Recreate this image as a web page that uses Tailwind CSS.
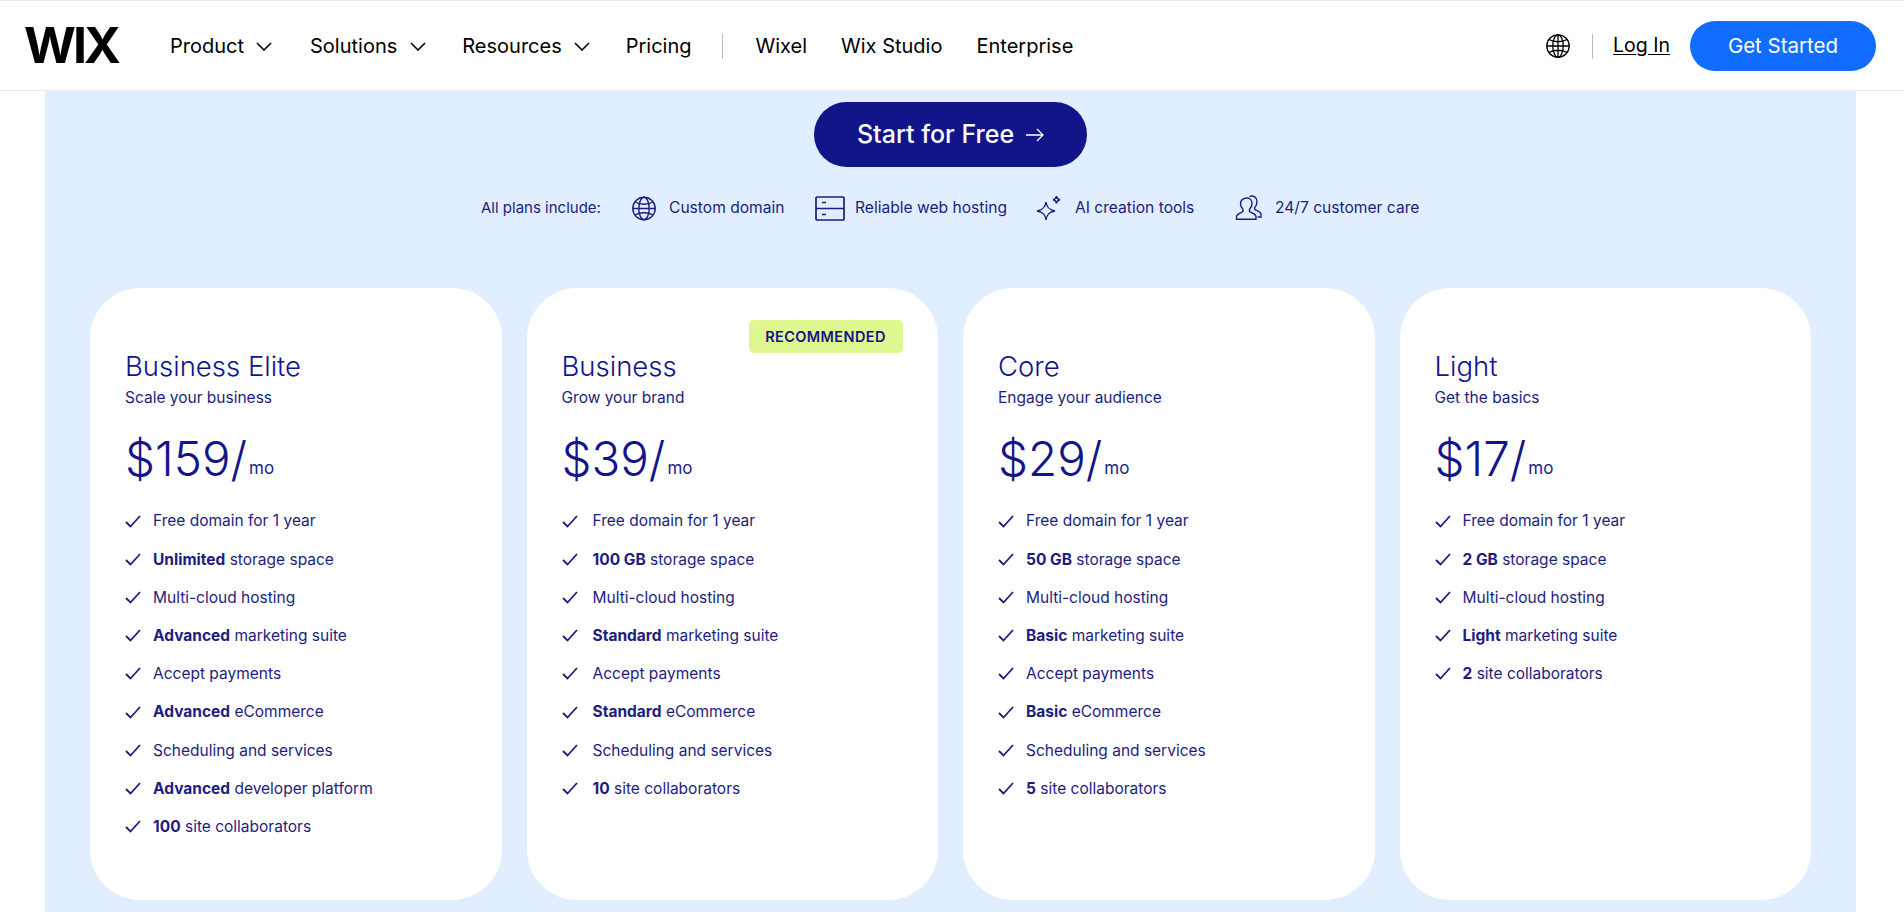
<!DOCTYPE html>
<html lang="en">
<head>
    <meta charset="UTF-8">
    <meta name="viewport" content="width=device-width, initial-scale=1.0">
    <title>Wix Plans</title>
    <script src="https://cdn.jsdelivr.net/npm/@tailwindcss/browser@4"></script>
</head>
<body class="bg-white h-screen overflow-hidden font-['Inter',sans-serif]">
    <!-- Header -->
    <header class="h-[91px] pt-px bg-white border-t border-b border-[#e9e9ee] flex items-center text-black text-[20px]">
        <div class="ml-[24px] -mt-[2px] w-[146px] text-[50px] leading-none font-bold tracking-[-3px]">WIX</div>
        <nav class="flex items-center">
            <a class="flex items-center">Product<svg class="ml-[12px]" width="16" height="9" viewBox="0 0 16 9" fill="none" stroke="#000" stroke-width="1.6"><path d="M1 1l7 7 7-7"/></svg></a>
            <a class="flex items-center ml-[38px]">Solutions<svg class="ml-[13px]" width="16" height="9" viewBox="0 0 16 9" fill="none" stroke="#000" stroke-width="1.6"><path d="M1 1l7 7 7-7"/></svg></a>
            <a class="flex items-center ml-[36px]">Resources<svg class="ml-[12px]" width="16" height="9" viewBox="0 0 16 9" fill="none" stroke="#000" stroke-width="1.6"><path d="M1 1l7 7 7-7"/></svg></a>
            <a class="ml-[36px]">Pricing</a>
            <span class="ml-[30px] w-px h-[25px] bg-[#bdbdbd]"></span>
            <a class="ml-[33px]">Wixel</a>
            <a class="ml-[34px]">Wix Studio</a>
            <a class="ml-[34px]">Enterprise</a>
        </nav>
        <div class="ml-auto mr-[28px] flex items-center">
            <svg width="24" height="24" viewBox="0 0 24 24" fill="none" stroke="#000" stroke-width="1.3"><circle cx="12" cy="12" r="11.200"/><ellipse cx="12" cy="12" rx="5.200" ry="11.200"/><path d="M12 .8v22.400M.8 12h22.400M3 5.500c5 3 13 3 18 0M3 18.500c5-3 13-3 18 0"/></svg>
            <span class="ml-[22px] w-px h-[25px] bg-[#bdbdbd]"></span>
            <a class="ml-[20px] text-[19.500px] underline underline-offset-2">Log In</a>
            <a class="ml-[20px] w-[186px] h-[50px] rounded-full bg-[#116dff] text-white text-[20.500px] flex items-center justify-center">Get Started</a>
        </div>
    </header>

    <!-- Plans panel -->
    <main class="mx-[45px] w-[1811px] h-[821px] bg-[#e0eeff] text-[#1d1d7e] pt-[11px]">
        <div class="flex justify-center">
            <a class="w-[273px] h-[65px] rounded-full bg-[#12148a] text-white text-[25px] font-medium flex items-center justify-center">Start for Free<svg class="ml-[12px]" width="18" height="14" viewBox="0 0 18 14" fill="none" stroke="#fff" stroke-width="1.3"><path d="M0 7h17M11 1l6 6-6 6"/></svg></a>
        </div>
        <div class="mt-[28px] h-[26px] flex items-center text-[15.600px] pl-[436px]">
            <span class="w-[151px] text-[15px]">All plans include:</span>
            <svg width="24" height="25" viewBox="0 0 24 25" fill="none" stroke="#1d1d7e" stroke-width="1.4"><circle cx="12" cy="12.500" r="11.200"/><ellipse cx="12" cy="12.500" rx="5.200" ry="11.200"/><path d="M.8 12.500h22.400M3 6c5 3 13 3 18 0M3 19c5-3 13-3 18 0"/></svg>
            <span class="ml-[13px] w-[146px]">Custom domain</span>
            <svg width="30" height="25" viewBox="0 0 30 25" fill="none" stroke="#1d1d7e" stroke-width="1.7"><rect x="1" y="1" width="28" height="23" rx="1"/><path d="M1 12.500h28M7 6.500h4M7 18.500h4"/></svg>
            <span class="ml-[10px] w-[181px]">Reliable web hosting</span>
            <svg width="26" height="26" viewBox="0 0 26 26" fill="none" stroke="#1d1d7e" stroke-width="1.4"><path d="M10 7c.8 5.500 3 8 9 9-6 1-8.200 3.500-9 9-.8-5.500-3-8-9-9 6-1 8.200-3.500 9-9zM20.500 1c.4 2.500 1.200 3.300 3.500 3.700-2.300.4-3.100 1.200-3.500 3.700-.4-2.500-1.200-3.300-3.500-3.700 2.300-.4 3.100-1.200 3.500-3.700z"/></svg>
            <span class="ml-[13px] w-[160px]">AI creation tools</span>
            <svg width="28" height="26" viewBox="0 0 28 26" fill="none" stroke="#1d1d7e" stroke-width="1.4"><path d="M12 3c3 0 5 2.500 5 5.500 0 2.500-1 4.500-2.500 6v2c1 1.200 6 2 6.500 5v2.800H1.500v-2.800c.5-3 5.500-3.800 6.500-5v-2C6.500 13 5.500 11 5.500 8.500 5.500 5.500 8 3 12 3zM14.500 1.500c4-1.500 7.500 1 7.500 5 0 2.500-.8 4.500-2.300 6v2c1 1 5.800 1.700 6.300 4.500v3h-3.500"/></svg>
            <span class="ml-[12px]">24/7 customer care</span>
        </div>

        <div class="mt-[67px] ml-[45px] flex gap-[25px]">
            <!-- Business Elite -->
            <section class="w-[411.500px] h-[612px] bg-white rounded-[50px] pl-[35px] pt-[60px]">
                <h2 class="text-[27.500px] font-light leading-[36px] text-[#12148a]">Business Elite</h2>
                <p class="text-[15.500px] leading-[22px] mt-[3px]">Scale your business</p>
                <div class="mt-[14px] h-[66px] flex items-baseline text-[#12148a]"><span class="text-[47.500px] font-light">$159/</span><span class="ml-[2px] -translate-y-[2px] text-[17px] text-[#1d1d7e]">mo</span></div>
                <ul class="mt-[13px] text-[15.500px]">
                    <li class="h-[38.200px] flex items-center"><svg class="mr-[12px]" width="16" height="13" viewBox="0 0 16 13" fill="none" stroke="#1d1d7e" stroke-width="1.8"><path d="M1 7l4.500 4.500L15 1"/></svg>Free domain for 1 year</li>
                    <li class="h-[38.200px] flex items-center"><svg class="mr-[12px]" width="16" height="13" viewBox="0 0 16 13" fill="none" stroke="#1d1d7e" stroke-width="1.8"><path d="M1 7l4.500 4.500L15 1"/></svg><span><b class="font-bold">Unlimited</b> storage space</span></li>
                    <li class="h-[38.200px] flex items-center"><svg class="mr-[12px]" width="16" height="13" viewBox="0 0 16 13" fill="none" stroke="#1d1d7e" stroke-width="1.8"><path d="M1 7l4.500 4.500L15 1"/></svg>Multi-cloud hosting</li>
                    <li class="h-[38.200px] flex items-center"><svg class="mr-[12px]" width="16" height="13" viewBox="0 0 16 13" fill="none" stroke="#1d1d7e" stroke-width="1.8"><path d="M1 7l4.500 4.500L15 1"/></svg><span><b class="font-bold">Advanced</b> marketing suite</span></li>
                    <li class="h-[38.200px] flex items-center"><svg class="mr-[12px]" width="16" height="13" viewBox="0 0 16 13" fill="none" stroke="#1d1d7e" stroke-width="1.8"><path d="M1 7l4.500 4.500L15 1"/></svg>Accept payments</li>
                    <li class="h-[38.200px] flex items-center"><svg class="mr-[12px]" width="16" height="13" viewBox="0 0 16 13" fill="none" stroke="#1d1d7e" stroke-width="1.8"><path d="M1 7l4.500 4.500L15 1"/></svg><span><b class="font-bold">Advanced</b> eCommerce</span></li>
                    <li class="h-[38.200px] flex items-center"><svg class="mr-[12px]" width="16" height="13" viewBox="0 0 16 13" fill="none" stroke="#1d1d7e" stroke-width="1.8"><path d="M1 7l4.500 4.500L15 1"/></svg>Scheduling and services</li>
                    <li class="h-[38.200px] flex items-center"><svg class="mr-[12px]" width="16" height="13" viewBox="0 0 16 13" fill="none" stroke="#1d1d7e" stroke-width="1.8"><path d="M1 7l4.500 4.500L15 1"/></svg><span><b class="font-bold">Advanced</b> developer platform</span></li>
                    <li class="h-[38.200px] flex items-center"><svg class="mr-[12px]" width="16" height="13" viewBox="0 0 16 13" fill="none" stroke="#1d1d7e" stroke-width="1.8"><path d="M1 7l4.500 4.500L15 1"/></svg><span><b class="font-bold">100</b> site collaborators</span></li>
                </ul>
            </section>

            <!-- Business -->
            <section class="relative w-[411.500px] h-[612px] bg-white rounded-[50px] pl-[35px] pt-[60px]">
                <span class="absolute left-[222px] top-[32px] w-[154px] h-[33px] rounded-[5px] bg-[#dff78f] text-[#12148a] text-[14.500px] font-semibold tracking-[0.4px] flex items-center justify-center">RECOMMENDED</span>
                <h2 class="text-[27.500px] font-light leading-[36px] text-[#12148a]">Business</h2>
                <p class="text-[15.500px] leading-[22px] mt-[3px]">Grow your brand</p>
                <div class="mt-[14px] h-[66px] flex items-baseline text-[#12148a]"><span class="text-[47.500px] font-light">$39/</span><span class="ml-[2px] -translate-y-[2px] text-[17px] text-[#1d1d7e]">mo</span></div>
                <ul class="mt-[13px] text-[15.500px]">
                    <li class="h-[38.200px] flex items-center"><svg class="mr-[15px]" width="16" height="13" viewBox="0 0 16 13" fill="none" stroke="#1d1d7e" stroke-width="1.8"><path d="M1 7l4.500 4.500L15 1"/></svg>Free domain for 1 year</li>
                    <li class="h-[38.200px] flex items-center"><svg class="mr-[15px]" width="16" height="13" viewBox="0 0 16 13" fill="none" stroke="#1d1d7e" stroke-width="1.8"><path d="M1 7l4.500 4.500L15 1"/></svg><span><b class="font-bold">100 GB</b> storage space</span></li>
                    <li class="h-[38.200px] flex items-center"><svg class="mr-[15px]" width="16" height="13" viewBox="0 0 16 13" fill="none" stroke="#1d1d7e" stroke-width="1.8"><path d="M1 7l4.500 4.500L15 1"/></svg>Multi-cloud hosting</li>
                    <li class="h-[38.200px] flex items-center"><svg class="mr-[15px]" width="16" height="13" viewBox="0 0 16 13" fill="none" stroke="#1d1d7e" stroke-width="1.8"><path d="M1 7l4.500 4.500L15 1"/></svg><span><b class="font-bold">Standard</b> marketing suite</span></li>
                    <li class="h-[38.200px] flex items-center"><svg class="mr-[15px]" width="16" height="13" viewBox="0 0 16 13" fill="none" stroke="#1d1d7e" stroke-width="1.8"><path d="M1 7l4.500 4.500L15 1"/></svg>Accept payments</li>
                    <li class="h-[38.200px] flex items-center"><svg class="mr-[15px]" width="16" height="13" viewBox="0 0 16 13" fill="none" stroke="#1d1d7e" stroke-width="1.8"><path d="M1 7l4.500 4.500L15 1"/></svg><span><b class="font-bold">Standard</b> eCommerce</span></li>
                    <li class="h-[38.200px] flex items-center"><svg class="mr-[15px]" width="16" height="13" viewBox="0 0 16 13" fill="none" stroke="#1d1d7e" stroke-width="1.8"><path d="M1 7l4.500 4.500L15 1"/></svg>Scheduling and services</li>
                    <li class="h-[38.200px] flex items-center"><svg class="mr-[15px]" width="16" height="13" viewBox="0 0 16 13" fill="none" stroke="#1d1d7e" stroke-width="1.8"><path d="M1 7l4.500 4.500L15 1"/></svg><span><b class="font-bold">10</b> site collaborators</span></li>
                </ul>
            </section>

            <!-- Core -->
            <section class="w-[411.500px] h-[612px] bg-white rounded-[50px] pl-[35px] pt-[60px]">
                <h2 class="text-[27.500px] font-light leading-[36px] text-[#12148a]">Core</h2>
                <p class="text-[15.500px] leading-[22px] mt-[3px]">Engage your audience</p>
                <div class="mt-[14px] h-[66px] flex items-baseline text-[#12148a]"><span class="text-[47.500px] font-light">$29/</span><span class="ml-[2px] -translate-y-[2px] text-[17px] text-[#1d1d7e]">mo</span></div>
                <ul class="mt-[13px] text-[15.500px]">
                    <li class="h-[38.200px] flex items-center"><svg class="mr-[12px]" width="16" height="13" viewBox="0 0 16 13" fill="none" stroke="#1d1d7e" stroke-width="1.8"><path d="M1 7l4.500 4.500L15 1"/></svg>Free domain for 1 year</li>
                    <li class="h-[38.200px] flex items-center"><svg class="mr-[12px]" width="16" height="13" viewBox="0 0 16 13" fill="none" stroke="#1d1d7e" stroke-width="1.8"><path d="M1 7l4.500 4.500L15 1"/></svg><span><b class="font-bold">50 GB</b> storage space</span></li>
                    <li class="h-[38.200px] flex items-center"><svg class="mr-[12px]" width="16" height="13" viewBox="0 0 16 13" fill="none" stroke="#1d1d7e" stroke-width="1.8"><path d="M1 7l4.500 4.500L15 1"/></svg>Multi-cloud hosting</li>
                    <li class="h-[38.200px] flex items-center"><svg class="mr-[12px]" width="16" height="13" viewBox="0 0 16 13" fill="none" stroke="#1d1d7e" stroke-width="1.8"><path d="M1 7l4.500 4.500L15 1"/></svg><span><b class="font-bold">Basic</b> marketing suite</span></li>
                    <li class="h-[38.200px] flex items-center"><svg class="mr-[12px]" width="16" height="13" viewBox="0 0 16 13" fill="none" stroke="#1d1d7e" stroke-width="1.8"><path d="M1 7l4.500 4.500L15 1"/></svg>Accept payments</li>
                    <li class="h-[38.200px] flex items-center"><svg class="mr-[12px]" width="16" height="13" viewBox="0 0 16 13" fill="none" stroke="#1d1d7e" stroke-width="1.8"><path d="M1 7l4.500 4.500L15 1"/></svg><span><b class="font-bold">Basic</b> eCommerce</span></li>
                    <li class="h-[38.200px] flex items-center"><svg class="mr-[12px]" width="16" height="13" viewBox="0 0 16 13" fill="none" stroke="#1d1d7e" stroke-width="1.8"><path d="M1 7l4.500 4.500L15 1"/></svg>Scheduling and services</li>
                    <li class="h-[38.200px] flex items-center"><svg class="mr-[12px]" width="16" height="13" viewBox="0 0 16 13" fill="none" stroke="#1d1d7e" stroke-width="1.8"><path d="M1 7l4.500 4.500L15 1"/></svg><span><b class="font-bold">5</b> site collaborators</span></li>
                </ul>
            </section>

            <!-- Light -->
            <section class="w-[411.500px] h-[612px] bg-white rounded-[50px] pl-[35px] pt-[60px]">
                <h2 class="text-[27.500px] font-light leading-[36px] text-[#12148a]">Light</h2>
                <p class="text-[15.500px] leading-[22px] mt-[3px]">Get the basics</p>
                <div class="mt-[14px] h-[66px] flex items-baseline text-[#12148a]"><span class="text-[47.500px] font-light">$17/</span><span class="ml-[2px] -translate-y-[2px] text-[17px] text-[#1d1d7e]">mo</span></div>
                <ul class="mt-[13px] text-[15.500px]">
                    <li class="h-[38.200px] flex items-center"><svg class="mr-[12px]" width="16" height="13" viewBox="0 0 16 13" fill="none" stroke="#1d1d7e" stroke-width="1.8"><path d="M1 7l4.500 4.500L15 1"/></svg>Free domain for 1 year</li>
                    <li class="h-[38.200px] flex items-center"><svg class="mr-[12px]" width="16" height="13" viewBox="0 0 16 13" fill="none" stroke="#1d1d7e" stroke-width="1.8"><path d="M1 7l4.500 4.500L15 1"/></svg><span><b class="font-bold">2 GB</b> storage space</span></li>
                    <li class="h-[38.200px] flex items-center"><svg class="mr-[12px]" width="16" height="13" viewBox="0 0 16 13" fill="none" stroke="#1d1d7e" stroke-width="1.8"><path d="M1 7l4.500 4.500L15 1"/></svg>Multi-cloud hosting</li>
                    <li class="h-[38.200px] flex items-center"><svg class="mr-[12px]" width="16" height="13" viewBox="0 0 16 13" fill="none" stroke="#1d1d7e" stroke-width="1.8"><path d="M1 7l4.500 4.500L15 1"/></svg><span><b class="font-bold">Light</b> marketing suite</span></li>
                    <li class="h-[38.200px] flex items-center"><svg class="mr-[12px]" width="16" height="13" viewBox="0 0 16 13" fill="none" stroke="#1d1d7e" stroke-width="1.8"><path d="M1 7l4.500 4.500L15 1"/></svg><span><b class="font-bold">2</b> site collaborators</span></li>
                </ul>
            </section>
        </div>
    </main>
</body>
</html>
